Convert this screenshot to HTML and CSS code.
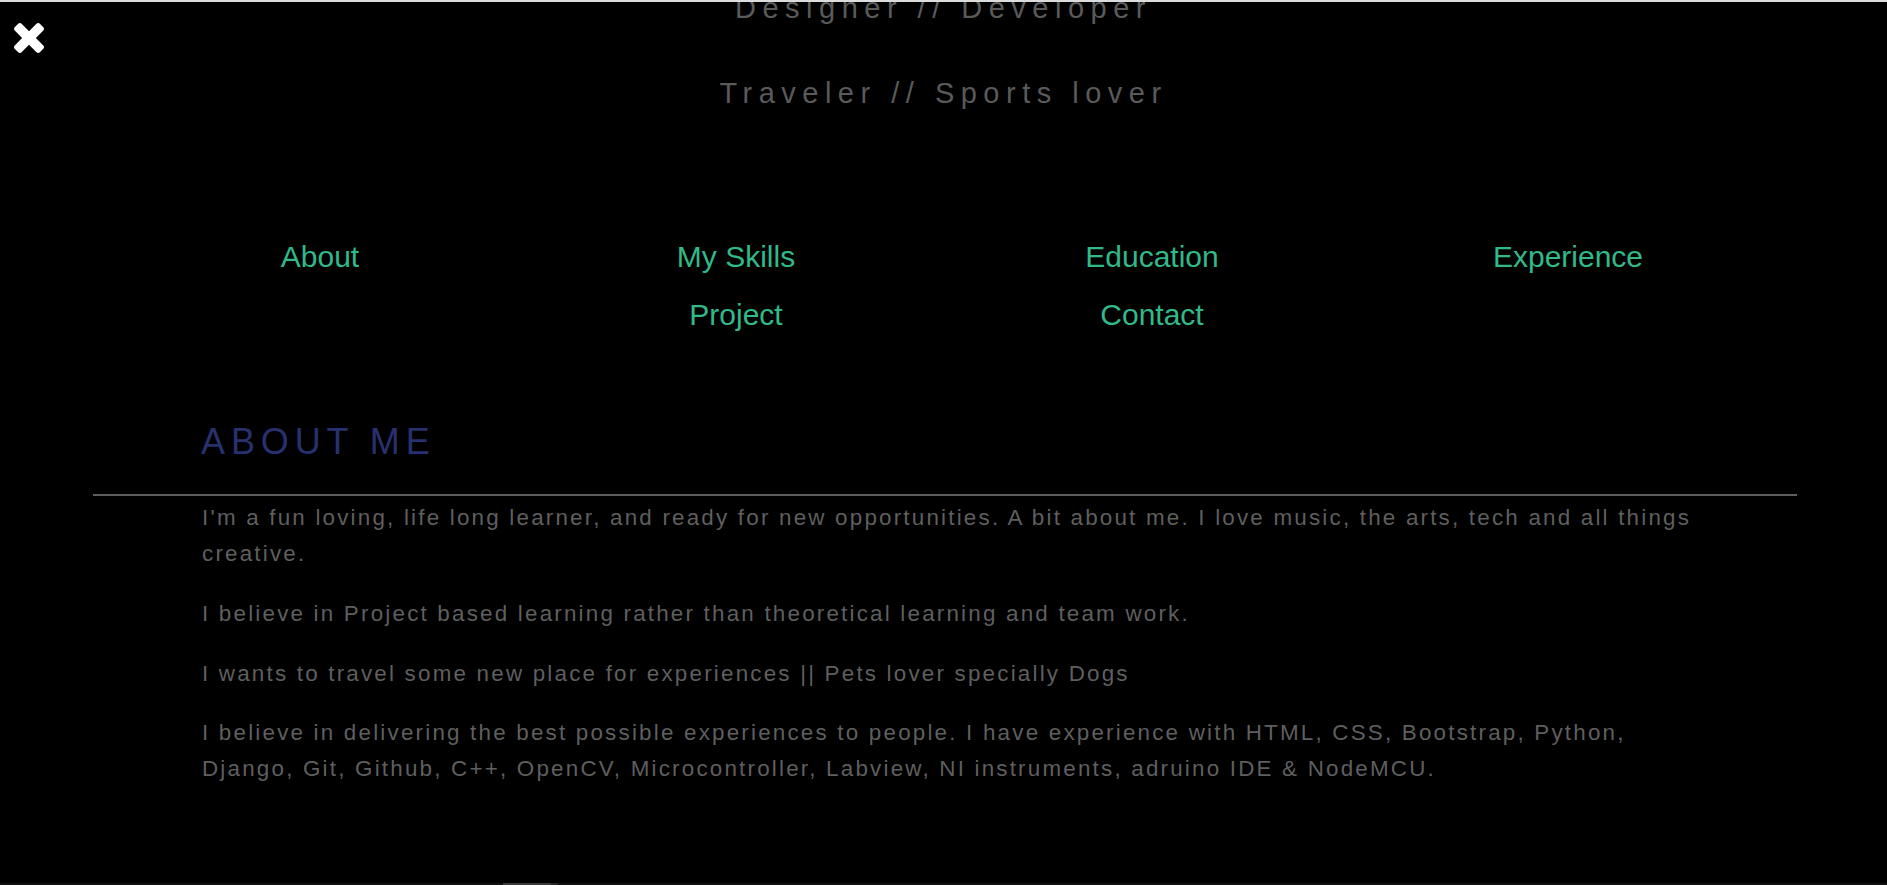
FILE: index.html
```html
<!DOCTYPE html>
<html lang="en">
<head>
<meta charset="utf-8">
<title>About Me</title>
<link rel="stylesheet" href="styles.css">
</head>
<body>
<div class="top-strip"></div>
<a class="close-btn" href="#" aria-label="Close">
  <svg viewBox="110 366 1188 1188" width="30" height="30" aria-hidden="true"><path fill="#fff" d="M1298 1322q0 40-28 68l-136 136q-28 28-68 28t-68-28l-294-294-294 294q-28 28-68 28t-68-28l-136-136q-28-28-28-68t28-68l294-294-294-294q-28-28-28-68t28-68l136-136q28-28 68-28t68 28l294 294 294-294q28-28 68-28t68 28l136 136q28 28 28 68t-28 68l-294 294 294 294q28 28 28 68z"/></svg>
</a>
<header class="intro">
  <p class="tagline">Designer // Developer</p>
  <p class="tagline second">Traveler // Sports lover</p>
</header>
<nav class="menu">
  <a href="#about">About</a>
  <a href="#skills">My Skills</a>
  <a href="#education">Education</a>
  <a href="#experience">Experience</a>
  <a href="#project">Project</a>
  <a href="#contact">Contact</a>
</nav>
<section class="about" id="about">
  <h2 class="about-title">ABOUT ME</h2>
  <hr class="divider">
  <div class="about-body">
    <p>I'm a fun loving, life long learner, and ready for new opportunities. A bit about me. I love music, the arts, tech and all things creative.</p>
    <p>I believe in Project based learning rather than theoretical learning and team work.</p>
    <p>I wants to travel some new place for experiences || Pets lover specially Dogs</p>
    <p>I believe in delivering the best possible experiences to people. I have experience with HTML, CSS, Bootstrap, Python, Django, Git, Github, C++, OpenCV, Microcontroller, Labview, NI instruments, adruino IDE &amp; NodeMCU.</p>
  </div>
</section>
<div class="bottom-strip"><span class="thumb"></span><span class="thumb-edge"></span></div>
</body>
</html>
```

FILE: styles.css
```css
html, body {
  margin: 0;
  padding: 0;
  background: #000;
}

body {
  height: 885px;
  overflow: hidden;
  display: flex;
  flex-direction: column;
  font-family: "Liberation Sans", Arial, sans-serif;
}

.top-strip {
  height: 2px;
  background: #dcdcdc;
  position: relative;
  z-index: 2;
  flex: none;
}

.close-btn {
  position: absolute;
  left: 14px;
  top: 23px;
  width: 30px;
  height: 30px;
  display: block;
  line-height: 0;
}

.intro {
  margin-top: -14px;
  text-align: center;
  flex: none;
}

.tagline {
  margin: 0;
  font-size: 29px;
  line-height: 40px;
  letter-spacing: 6.5px;
  color: #5a5a5a;
}

.tagline.second {
  margin-top: 45px;
}

.menu {
  flex: none;
  display: flex;
  flex-wrap: wrap;
  justify-content: center;
  padding: 0 111px 0 112px;
  margin-top: 115px;
}

.menu a {
  width: 25%;
  text-align: center;
  font-size: 30px;
  line-height: 58px;
  color: #31b98a;
  text-decoration: none;
}

.about {
  flex: none;
  margin-top: 76px;
}

.about-title {
  margin: 0 0 0 201px;
  font-weight: normal;
  font-size: 36px;
  line-height: 44px;
  letter-spacing: 5.9px;
  color: #27316f;
}

.divider {
  border: 0;
  height: 2px;
  background: #5e5e5e;
  margin: 30px 90px 0 93px;
}

.about-body {
  margin: 4px 175px 0 202px;
}

.about-body p {
  margin: 0 0 24px;
  font-size: 22.4px;
  line-height: 35.84px;
  letter-spacing: 2.2px;
  color: #5f5f5f;
}

.bottom-strip {
  margin-top: auto;
  height: 2px;
  background: #111;
  display: flex;
  flex: none;
}

.thumb {
  margin-left: 503px;
  width: 48px;
  background: #3a3a3a;
}

.thumb-edge {
  width: 7px;
  background: #262626;
}
```
